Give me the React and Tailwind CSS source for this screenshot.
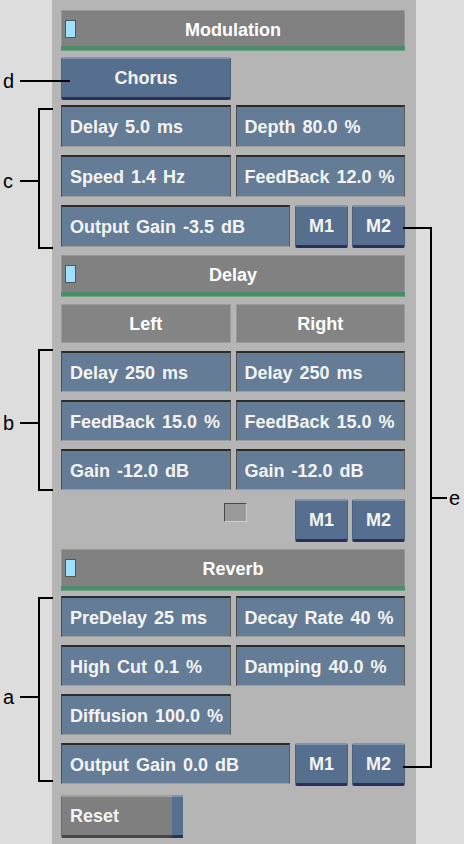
import React from "react";

const font = { fontFamily: '"Liberation Sans", Arial, sans-serif' };

function Field({ children, className = "" }) {
  return (
    <div
      className={`h-[41px] flex items-center pl-[8px] pt-[2px] bg-[#647c96] border-t-2 border-t-[#2b2b2b] border-l border-l-[#4d4d4d] border-r border-r-[#5c5c5c] border-b border-b-[#9d9d9d] text-[18px] font-bold text-[#f4f4f4] [word-spacing:2px] whitespace-nowrap overflow-hidden ${className}`}
    >
      {children}
    </div>
  );
}

function BlueBtn({ children, className = "" }) {
  return (
    <div
      className={`h-[43px] flex items-center justify-center pt-[1px] bg-[#566f8e] border-t-2 border-t-[#7e94ae] border-b-[3px] border-b-[#2c2f5e] border-x border-x-[#4c617d] rounded-[2px] text-[18px] font-bold text-[#f4f4f4] ${className}`}
    >
      {children}
    </div>
  );
}

function Header({ title, h }) {
  return (
    <div className="flex flex-col">
      <div
        className={`${h} relative bg-[#818181] border border-[#979797] border-b-0 flex items-center justify-center pt-[3px] text-white font-bold text-[18px]`}
      >
        <span className="absolute left-[3px] top-[9px] w-[11px] h-[18px] bg-[#a0e0ff] border border-[#555]" />
        {title}
      </div>
      <div className="h-[5px] bg-[#4f8c69] border-b border-[#6aa383]" />
    </div>
  );
}

function Label({ children }) {
  return (
    <div className="h-[39px] flex items-center justify-center pt-[2px] bg-[#848484] border border-[#9a9a9a] text-white font-bold text-[18px]">
      {children}
    </div>
  );
}

function MPair() {
  return (
    <div className="flex gap-[4px] ml-[5px]">
      <BlueBtn className="w-[53px]">M1</BlueBtn>
      <BlueBtn className="w-[53px]">M2</BlueBtn>
    </div>
  );
}

function Line({ className }) {
  return <div className={`absolute bg-black ${className}`} />;
}

function Letter({ children, className }) {
  return (
    <div
      className={`absolute text-[20px] leading-none text-black ${className}`}
      style={font}
    >
      {children}
    </div>
  );
}

export default function App() {
  return (
    <div
      className="relative w-[464px] h-[844px] bg-[#dddddd] overflow-hidden"
      style={font}
    >
      <div className="ml-[52px] w-[364px] h-[844px] bg-[#b5b5b5] pl-[9px] pr-[11px] flex flex-col">
        {/* Modulation */}
        <div className="mt-[10px]">
          <Header title="Modulation" h="h-[36px]" />
        </div>
        <BlueBtn className="mt-[6px] w-[170px]">Chorus</BlueBtn>
        <div className="mt-[5px] grid grid-cols-2 gap-x-[5px] gap-y-[8px]">
          <Field className="h-[42px]">Delay 5.0 ms</Field>
          <Field className="h-[42px]">Depth 80.0 %</Field>
          <Field className="h-[42px]">Speed 1.4 Hz</Field>
          <Field className="h-[42px]">FeedBack 12.0 %</Field>
        </div>
        <div className="mt-[8px] flex items-start">
          <Field className="w-[229px] h-[42px]">Output Gain -3.5 dB</Field>
          <MPair />
        </div>

        {/* Delay */}
        <div className="mt-[7px]">
          <Header title="Delay" h="h-[37px]" />
        </div>
        <div className="mt-[7px] grid grid-cols-2 gap-x-[5px]">
          <Label>Left</Label>
          <Label>Right</Label>
        </div>
        <div className="mt-[8px] grid grid-cols-2 gap-x-[5px] gap-y-[8px]">
          <Field>Delay 250 ms</Field>
          <Field>Delay 250 ms</Field>
          <Field>FeedBack 15.0 %</Field>
          <Field>FeedBack 15.0 %</Field>
          <Field>Gain -12.0 dB</Field>
          <Field>Gain -12.0 dB</Field>
        </div>
        <div className="mt-[9px] flex items-start">
          <div className="ml-[163px] mt-[4px] w-[23px] h-[19px] bg-[#9a9a9a] border border-t-[#4a4a4a] border-l-[#4a4a4a] border-r-[#cfcfcf] border-b-[#cfcfcf]" />
          <div className="ml-auto">
            <MPair />
          </div>
        </div>

        {/* Reverb */}
        <div className="mt-[7px]">
          <Header title="Reverb" h="h-[37px]" />
        </div>
        <div className="mt-[5px] grid grid-cols-2 gap-x-[5px] gap-y-[8px]">
          <Field>PreDelay 25 ms</Field>
          <Field>Decay Rate 40 %</Field>
          <Field>High Cut 0.1 %</Field>
          <Field>Damping 40.0 %</Field>
          <Field>Diffusion 100.0 %</Field>
          <div />
        </div>
        <div className="mt-[8px] flex items-start">
          <Field className="w-[229px]">Output Gain 0.0 dB</Field>
          <MPair />
        </div>
        <div className="mt-[9px] flex w-[122px] h-[43px]">
          <div className="flex-1 flex items-center pl-[8px] pt-[1px] bg-[#7f7f7f] border-t-2 border-t-[#a0a0a0] border-b-[3px] border-b-[#454545] border-l border-l-[#6a6a6a] rounded-l-[2px] text-[18px] font-bold text-[#f4f4f4]">
            Reset
          </div>
          <div className="w-[11px] bg-[#56708f] border-t-2 border-t-[#7e94ae] border-b-[3px] border-b-[#2c2f5e]" />
        </div>
      </div>

      {/* Annotations */}
      <Letter className="left-[3px] top-[71px]">d</Letter>
      <Line className="left-[20px] top-[80px] w-[50px] h-[2px]" />

      <Letter className="left-[3px] top-[171px]">c</Letter>
      <Line className="left-[20px] top-[180px] w-[19px] h-[2px]" />
      <Line className="left-[38px] top-[108px] w-[2px] h-[141px]" />
      <Line className="left-[38px] top-[108px] w-[15px] h-[2px]" />
      <Line className="left-[38px] top-[247px] w-[15px] h-[2px]" />

      <Letter className="left-[3px] top-[413px]">b</Letter>
      <Line className="left-[20px] top-[422px] w-[19px] h-[2px]" />
      <Line className="left-[38px] top-[349px] w-[2px] h-[142px]" />
      <Line className="left-[38px] top-[349px] w-[15px] h-[2px]" />
      <Line className="left-[38px] top-[489px] w-[15px] h-[2px]" />

      <Letter className="left-[3px] top-[687px]">a</Letter>
      <Line className="left-[20px] top-[696px] w-[19px] h-[2px]" />
      <Line className="left-[38px] top-[597px] w-[2px] h-[185px]" />
      <Line className="left-[38px] top-[597px] w-[15px] h-[2px]" />
      <Line className="left-[38px] top-[780px] w-[15px] h-[2px]" />

      <Letter className="left-[449px] top-[488px]">e</Letter>
      <Line className="left-[430px] top-[497px] w-[17px] h-[2px]" />
      <Line className="left-[430px] top-[227px] w-[2px] h-[541px]" />
      <Line className="left-[403px] top-[227px] w-[28px] h-[2px]" />
      <Line className="left-[403px] top-[766px] w-[28px] h-[2px]" />
    </div>
  );
}
